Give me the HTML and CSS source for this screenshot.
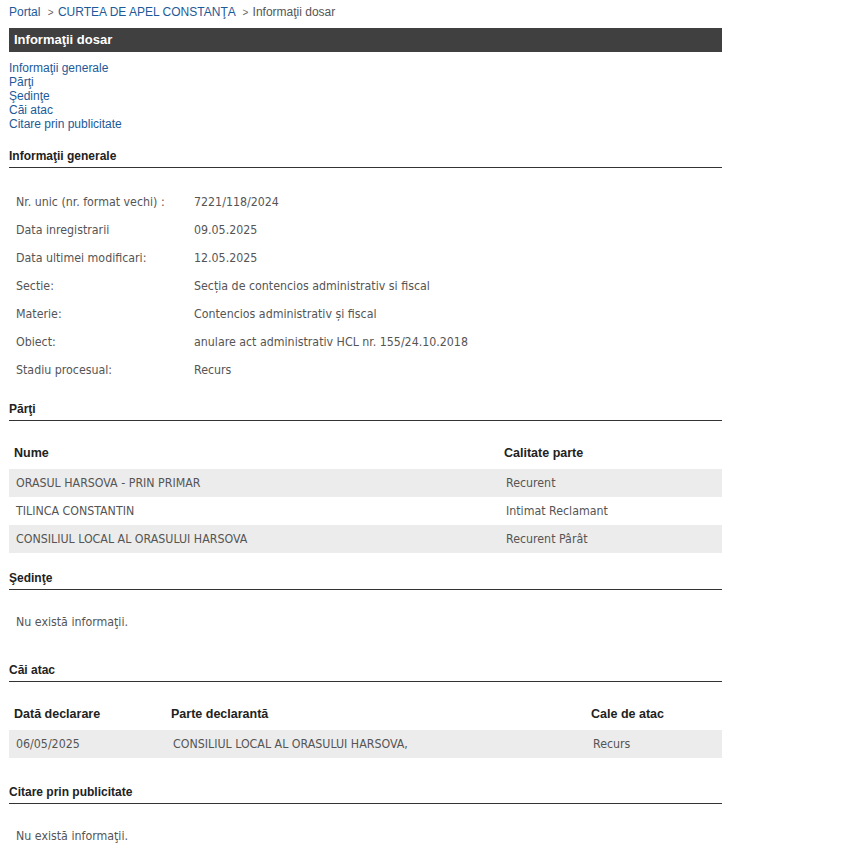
FILE: index.html
```html
<!DOCTYPE html>
<html lang="ro">
<head>
<meta charset="utf-8">
<title>Informaţii dosar</title>
<link rel="stylesheet" href="styles.css">
</head>
<body>
<div class="page">
  <div class="crumbs">
    <a class="crumb-link" href="#">Portal</a>
    <span class="sep">&gt;</span>
    <a class="crumb-link" href="#">CURTEA DE APEL CONSTANŢA</a>
    <span class="sep">&gt;</span>
    <span class="crumb-current">Informaţii dosar</span>
  </div>
  <div class="titlebar">Informaţii dosar</div>
  <ul class="toc">
    <li><a href="#">Informaţii generale</a></li>
    <li><a href="#">Părţi</a></li>
    <li><a href="#">Şedinţe</a></li>
    <li><a href="#">Căi atac</a></li>
    <li><a href="#">Citare prin publicitate</a></li>
  </ul>

  <h2 class="section-title">Informaţii generale</h2>
  <table class="grid info">
    <tr><td class="c-label">Nr. unic (nr. format vechi) :</td><td>7221/118/2024</td></tr>
    <tr><td class="c-label">Data inregistrarii</td><td>09.05.2025</td></tr>
    <tr><td class="c-label">Data ultimei modificari:</td><td>12.05.2025</td></tr>
    <tr><td class="c-label">Sectie:</td><td>Secția de contencios administrativ si fiscal</td></tr>
    <tr><td class="c-label">Materie:</td><td>Contencios administrativ și fiscal</td></tr>
    <tr><td class="c-label">Obiect:</td><td>anulare act administrativ HCL nr. 155/24.10.2018</td></tr>
    <tr><td class="c-label">Stadiu procesual:</td><td>Recurs</td></tr>
  </table>

  <h2 class="section-title">Părţi</h2>
  <table class="grid striped parti">
    <thead>
      <tr><th class="c-nume">Nume</th><th>Calitate parte</th></tr>
    </thead>
    <tbody>
      <tr><td>ORASUL HARSOVA - PRIN PRIMAR</td><td>Recurent</td></tr>
      <tr><td>TILINCA CONSTANTIN</td><td>Intimat Reclamant</td></tr>
      <tr><td>CONSILIUL LOCAL AL ORASULUI HARSOVA</td><td>Recurent Pârât</td></tr>
    </tbody>
  </table>

  <h2 class="section-title">Şedinţe</h2>
  <p class="empty">Nu există informaţii.</p>

  <h2 class="section-title">Căi atac</h2>
  <table class="grid striped atac">
    <thead>
      <tr><th class="c-data">Dată declarare</th><th class="c-parte">Parte declarantă</th><th>Cale de atac</th></tr>
    </thead>
    <tbody>
      <tr><td>06/05/2025</td><td>CONSILIUL LOCAL AL ORASULUI HARSOVA,</td><td>Recurs</td></tr>
    </tbody>
  </table>

  <h2 class="section-title">Citare prin publicitate</h2>
  <p class="empty">Nu există informaţii.</p>
</div>
</body>
</html>
```
FILE: styles.css
```css
html, body {
  margin: 0;
  padding: 0;
  background: #ffffff;
}

body {
  font-family: "Liberation Sans", Arial, sans-serif;
  font-size: 12px;
  color: #333333;
}

.page {
  width: 713px;
  padding-left: 9px;
}

.crumbs {
  padding-top: 5px;
  line-height: 14px;
  height: 14px;
  margin-bottom: 9px;
  white-space: nowrap;
}

.crumb-link {
  color: #1d5a99;
  text-decoration: none;
}

.sep {
  color: #666666;
  font-size: 10px;
  margin: 0 1px 0 4px;
}

.crumb-current {
  color: #555555;
}

.titlebar {
  background: #404040;
  color: #ffffff;
  font-weight: bold;
  font-size: 13px;
  height: 24px;
  line-height: 24px;
  padding-left: 5px;
}

.toc {
  list-style: none;
  margin: 9px 0 0 0;
  padding: 0;
}

.toc li {
  line-height: 14px;
}

.toc a {
  color: #1d5a99;
  text-decoration: none;
}

.section-title {
  margin: 18px 0 0 0;
  font-size: 12px;
  font-weight: bold;
  color: #222222;
  line-height: 14px;
  padding-bottom: 4px;
  border-bottom: 1px solid #333333;
}

.grid {
  width: 100%;
  border-collapse: collapse;
  margin-top: 18px;
  font-family: "DejaVu Sans Condensed", "DejaVu Sans", Tahoma, sans-serif;
  font-size: 12.3px;
  color: #555555;
}

.grid.info {
  margin-top: 20px;
}

.grid td {
  height: 28px;
  padding: 0 0 0 7px;
  vertical-align: middle;
  white-space: nowrap;
}

.grid th {
  height: 27px;
  padding: 0 0 3px 5px;
  text-align: left;
  vertical-align: middle;
  font-family: "Liberation Sans", Arial, sans-serif;
  font-weight: bold;
  font-size: 12.5px;
  color: #222222;
}

.info .c-label {
  width: 171px;
}

.striped tbody tr:nth-child(odd) td {
  background: #ececec;
}

.parti .c-nume {
  width: 485px;
}

.atac .c-data {
  width: 152px;
}

.atac .c-parte {
  width: 415px;
}

.atac {
  margin-bottom: 27px;
}

.empty {
  margin: 18px 0 27px 0;
  height: 28px;
  line-height: 28px;
  padding-left: 7px;
  font-family: "DejaVu Sans Condensed", "DejaVu Sans", Tahoma, sans-serif;
  font-size: 12.3px;
  color: #555555;
}
```
